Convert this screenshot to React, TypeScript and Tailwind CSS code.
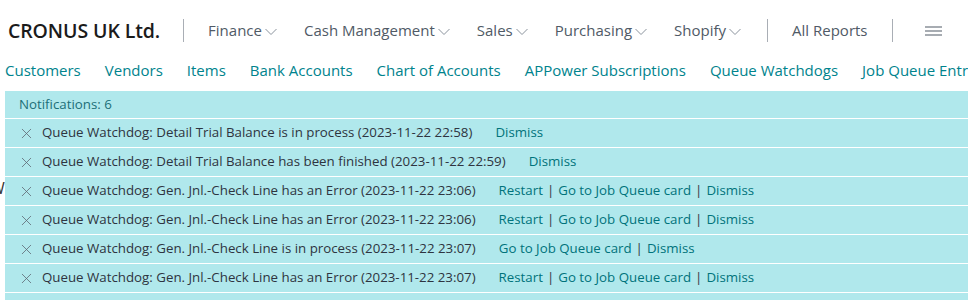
import { X } from "lucide-react";

const menus = ["Finance", "Cash Management", "Sales", "Purchasing", "Shopify"];
const links = [
  "Customers",
  "Vendors",
  "Items",
  "Bank Accounts",
  "Chart of Accounts",
  "APPower Subscriptions",
  "Queue Watchdogs",
  "Job Queue Entries",
];

type Note = { text: string; actions: string[] };

const notes: Note[] = [
  { text: "Queue Watchdog: Detail Trial Balance is in process (2023-11-22 22:58)", actions: ["Dismiss"] },
  { text: "Queue Watchdog: Detail Trial Balance has been finished (2023-11-22 22:59)", actions: ["Dismiss"] },
  { text: "Queue Watchdog: Gen. Jnl.-Check Line has an Error (2023-11-22 23:06)", actions: ["Restart", "Go to Job Queue card", "Dismiss"] },
  { text: "Queue Watchdog: Gen. Jnl.-Check Line has an Error (2023-11-22 23:06)", actions: ["Restart", "Go to Job Queue card", "Dismiss"] },
  { text: "Queue Watchdog: Gen. Jnl.-Check Line is in process (2023-11-22 23:07)", actions: ["Go to Job Queue card", "Dismiss"] },
  { text: "Queue Watchdog: Gen. Jnl.-Check Line has an Error (2023-11-22 23:07)", actions: ["Restart", "Go to Job Queue card", "Dismiss"] },
];

function Chevron() {
  return (
    <svg width="12" height="8" viewBox="0 0 12 8" className="ml-[3px] mt-[3px]">
      <path d="M0.5 1 L6 6.5 L11.5 1" fill="none" stroke="#8a929c" strokeWidth="1" />
    </svg>
  );
}

export default function App() {
  return (
    <div className="relative w-[968px] h-[300px] overflow-hidden bg-white font-['Open_Sans',sans-serif]">
      {/* Top bar */}
      <header className="flex items-center h-[60px] pt-[1px]">
        <div className="pl-[8px] pr-[23px] text-[19.5px] font-semibold text-[#1b1b1b] tracking-[-0.1px]">
          CRONUS UK Ltd.
        </div>
        <div className="w-px h-[23px] bg-[#a9aeb5]" />
        <nav className="flex items-center gap-[27px] pl-[24px] text-[15px] text-[#505a66]">
          {menus.map((m) => (
            <span key={m} className="flex items-center">
              {m}
              <Chevron />
            </span>
          ))}
        </nav>
        <div className="w-px h-[23px] bg-[#a9aeb5] ml-[26px]" />
        <span className="px-[24px] text-[15px] text-[#505a66]">All Reports</span>
        <div className="w-px h-[23px] bg-[#a9aeb5]" />
        <svg width="17" height="10" viewBox="0 0 17 10" className="ml-[32px]">
          <path d="M0 1 H17 M0 5 H17 M0 9 H17" stroke="#505a66" strokeWidth="1.2" />
        </svg>
      </header>

      {/* Nav links */}
      <div className="flex gap-[24px] pl-[5px] h-[20px] items-center whitespace-nowrap text-[15px] text-[#00838d]">
        {links.map((l) => (
          <span key={l}>{l}</span>
        ))}
      </div>

      {/* page content behind the notifications */}
      <div className="mt-[96px] -ml-[10px] text-[16px] text-[#333]">Welcome</div>

      {/* Notification panel overlay */}
      <div className="absolute left-[5px] top-[91px] right-0 bottom-0 bg-[#b0e8ec] text-[13.3px]">
        <div className="h-[28px] flex items-center pl-[14px] text-[#1c6f78] border-b border-white">
          Notifications: 6
        </div>
        {notes.map((n, i) => (
          <div key={i} className="h-[29px] flex items-center border-b border-white whitespace-nowrap">
            <X size={17} strokeWidth={1.1} className="ml-[13px] text-[#5b6470]" />
            <span className="ml-[7px] text-[#2e3440]">{n.text}</span>
            <span className="ml-[23px] flex items-center text-[#00737b]">
              {n.actions.map((a, j) => (
                <span key={a} className="flex items-center">
                  {j > 0 && <span className="mx-[4px] text-[#2e3440]">|</span>}
                  {a}
                </span>
              ))}
            </span>
          </div>
        ))}
      </div>
    </div>
  );
}
